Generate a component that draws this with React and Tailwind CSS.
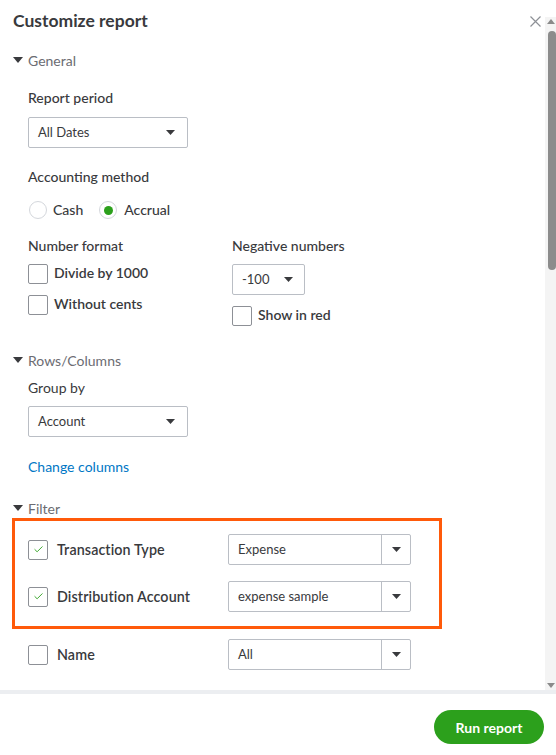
import { Check } from 'lucide-react';

const Caret = ({ className = '' }) => (
  <svg width="9" height="5" viewBox="0 0 9 5" className={className}>
    <path d="M0 0h9L4.5 5z" fill="#393a3d" />
  </svg>
);

const Section = ({ title, className = '' }) => (
  <div className={`flex items-center h-[20px] text-[14px] text-[#6b6c72] ${className}`}>
    <svg width="10" height="6" viewBox="0 0 10 6" className="mr-[5px]">
      <path d="M0 0h10L5 6z" fill="#393a3d" />
    </svg>
    <span>{title}</span>
  </div>
);

const Select = ({ value, width, className = '' }) => (
  <div
    className={`flex items-center justify-between h-[31px] border border-[#babec5] rounded-[2px] pl-[9px] pr-[12px] text-[13px] text-[#393a3d] ${width} ${className}`}
  >
    <span>{value}</span>
    <Caret />
  </div>
);

const SplitSelect = ({ value }) => (
  <div className="flex h-[31px] w-[183px] border border-[#babec5] rounded-[2px] text-[13px] text-[#393a3d]">
    <div className="flex-1 flex items-center pl-[9px]">{value}</div>
    <div className="w-[29px] border-l border-[#babec5] flex items-center justify-center">
      <Caret />
    </div>
  </div>
);

const Box = ({ checked }) => (
  <div className="w-[20px] h-[20px] border border-[#8d9096] rounded-[2px] bg-white flex items-center justify-center shrink-0">
    {checked && <Check size={11} strokeWidth={2} color="#2ca01c" />}
  </div>
);

const FilterRow = ({ label, value, checked, className = '' }) => (
  <div className={`flex items-center h-[31px] ${className}`}>
    <Box checked={checked} />
    <span className="ml-[9px] w-[171px] text-[14.3px] font-semibold text-[#393a3d] tracking-[0.1px]">{label}</span>
    <SplitSelect value={value} />
  </div>
);

const BoxLabel = ({ label, className = '' }) => (
  <div className={`h-[20px] flex items-center ${className}`}>
    <Box />
    <span className="ml-[6px] text-[14px] font-semibold pb-[3px]">{label}</span>
  </div>
);

export default function App() {
  return (
    <div className="w-[556px] h-[755px] bg-white flex flex-col font-['Lato',sans-serif] text-[#393a3d] overflow-hidden">
      <div className="flex h-[690px]">
        <div className="flex-1 pl-[13px] pt-[11px]">
          <div className="flex items-center justify-between h-[20px] pr-[4px]">
            <h1 className="text-[17.5px] font-bold leading-[20px] text-[#393a3d]">Customize report</h1>
            <svg width="11" height="11" viewBox="0 0 11 11">
              <path d="M0.5 0.5l10 10M10.5 0.5l-10 10" stroke="#8d9096" strokeWidth="1.2" />
            </svg>
          </div>

          <Section title="General" className="mt-[19px]" />
          <div className="pl-[15px]">
            <div className="mt-[17px] h-[20px] flex items-center text-[14px] font-medium">Report period</div>
            <Select value="All Dates" width="w-[160px]" className="mt-[10px]" />
            <div className="mt-[18px] h-[20px] flex items-center text-[14px] font-medium">Accounting method</div>
            <div className="mt-[14px] h-[20px] flex items-center text-[14px] font-medium">
              <div className="w-[18px] h-[18px] rounded-full border border-[#d4d7dc] ml-[1px]" />
              <span className="ml-[6px] pb-[1px]">Cash</span>
              <div className="w-[18px] h-[18px] rounded-full border border-[#d4d7dc] ml-[16px] flex items-center justify-center">
                <div className="w-[9px] h-[9px] rounded-full bg-[#2ca01c]" />
              </div>
              <span className="ml-[7px] pb-[1px]">Accrual</span>
            </div>

            <div className="mt-[15px] flex">
              <div className="w-[204px]">
                <div className="h-[20px] flex items-center text-[14px] font-medium">Number format</div>
                <BoxLabel label="Divide by 1000" className="mt-[9px]" />
                <BoxLabel label="Without cents" className="mt-[11px]" />
              </div>
              <div>
                <div className="h-[20px] flex items-center text-[14px] font-medium">Negative numbers</div>
                <Select value="-100" width="w-[73px]" className="mt-[9px] !pr-[11px]" />
                <BoxLabel label="Show in red" className="mt-[11px]" />
              </div>
            </div>
          </div>

          <Section title="Rows/Columns" className="mt-[24px]" />
          <div className="pl-[15px]">
            <div className="mt-[7px] h-[20px] flex items-center text-[14px] text-[#393a3d]">Group by</div>
            <Select value="Account" width="w-[160px]" className="mt-[9px]" />
            <div className="mt-[19px] h-[20px] flex items-center text-[14px] text-[#0077c5]">Change columns</div>
          </div>

          <Section title="Filter" className="mt-[22px] h-[18px]" />
          <div className="-ml-[1px] w-[430px] h-[111px] border-[3px] border-[#ff5a0a] pt-[13px] pl-[13px]">
            <FilterRow label="Transaction Type" value="Expense" checked />
            <FilterRow label="Distribution Account" value="expense sample" checked className="mt-[16px]" />
          </div>
          <div className="pl-[15px] mt-[10px]">
            <FilterRow label="Name" value="All" />
          </div>
        </div>

        <div className="w-[11px] pt-[17px] bg-white flex flex-col items-center">
          <div className="w-full flex-1 bg-[#f4f4f4] flex flex-col items-center pt-[2px] pb-[2px]">
            <svg width="8" height="5" viewBox="0 0 8 5">
              <path d="M0 5h8L4 0z" fill="#8a8a8a" />
            </svg>
            <div className="mt-[7px] w-[8px] h-[239px] rounded-[4px] bg-[#8c8c8c] ml-[2px]" />
            <div className="flex-1" />
            <svg width="8" height="5" viewBox="0 0 8 5">
              <path d="M0 0h8L4 5z" fill="#8a8a8a" />
            </svg>
          </div>
        </div>
      </div>

      <div className="h-[4px] bg-[#eceef1]" />

      <div className="flex justify-end pt-[16px] pr-[12px]">
        <button className="w-[110px] h-[34px] rounded-full bg-[#2ca01c] text-white text-[14px] font-bold">
          Run report
        </button>
      </div>
    </div>
  );
}
